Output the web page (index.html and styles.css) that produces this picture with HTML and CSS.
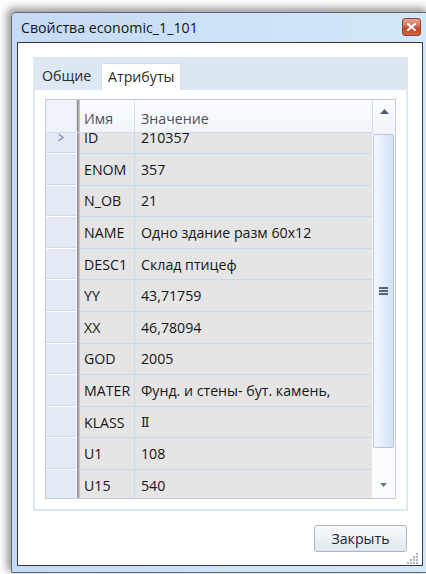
FILE: index.html
```html
<!DOCTYPE html>
<html lang="ru">
<head>
<meta charset="utf-8">
<title>Свойства economic_1_101</title>
<link rel="stylesheet" href="styles.css">
</head>
<body>
<div class="desk">
  <div class="window">
    <div class="titlebar">
      <span class="title">Свойства economic_1_101</span>
      <button class="close" aria-label="Закрыть">
        <svg width="9" height="8" viewBox="0 0 9 8"><path d="M1 1 L8 7 M8 1 L1 7" stroke="#fff" stroke-width="2" stroke-linecap="square"/></svg>
      </button>
    </div>
    <div class="client">
      <div class="tabs">
        <div class="tabstrip">
          <div class="tab">Общие</div>
          <div class="tab active">Атрибуты</div>
        </div>
        <div class="panel">
          <div class="grid">
            <div class="main">
              <div class="hrow">
                <div class="rh-h"></div>
                <div class="sep"></div>
                <div class="hc c-name">Имя</div>
                <div class="hc c-val">Значение</div>
              </div>
              <div class="body">
                <div class="rows">
                  <div class="row"><div class="rh"><svg width="8" height="9" viewBox="0 0 8 9"><path d="M1.5 1 L6 4.5 L1.5 8" fill="none" stroke="#8797aa" stroke-width="1.4"/></svg></div><div class="sep"></div><div class="c c-name">ID</div><div class="c c-val">210357</div></div>
                  <div class="row"><div class="rh"></div><div class="sep"></div><div class="c c-name">ENOM</div><div class="c c-val">357</div></div>
                  <div class="row"><div class="rh"></div><div class="sep"></div><div class="c c-name">N_OB</div><div class="c c-val">21</div></div>
                  <div class="row"><div class="rh"></div><div class="sep"></div><div class="c c-name">NAME</div><div class="c c-val">Одно здание разм 60x12</div></div>
                  <div class="row"><div class="rh"></div><div class="sep"></div><div class="c c-name">DESC1</div><div class="c c-val">Склад птицеф</div></div>
                  <div class="row"><div class="rh"></div><div class="sep"></div><div class="c c-name">YY</div><div class="c c-val">43,71759</div></div>
                  <div class="row"><div class="rh"></div><div class="sep"></div><div class="c c-name">XX</div><div class="c c-val">46,78094</div></div>
                  <div class="row"><div class="rh"></div><div class="sep"></div><div class="c c-name">GOD</div><div class="c c-val">2005</div></div>
                  <div class="row"><div class="rh"></div><div class="sep"></div><div class="c c-name">MATER</div><div class="c c-val">Фунд. и стены- бут. камень,</div></div>
                  <div class="row"><div class="rh"></div><div class="sep"></div><div class="c c-name">KLASS</div><div class="c c-val"><span class="roman">Ⅱ</span></div></div>
                  <div class="row"><div class="rh"></div><div class="sep"></div><div class="c c-name">U1</div><div class="c c-val">108</div></div>
                  <div class="row"><div class="rh"></div><div class="sep"></div><div class="c c-name">U15</div><div class="c c-val">540</div></div>
                </div>
              </div>
            </div>
            <div class="vscroll">
              <div class="sb-up"><svg width="9" height="5" viewBox="0 0 9 5"><path d="M0 5 L4.5 0 L9 5 Z" fill="#4e5f74"/></svg></div>
              <div class="thumb"><span class="grip"></span><span class="grip"></span><span class="grip"></span></div>
              <div class="track"></div>
              <div class="sb-down"><svg width="7" height="4" viewBox="0 0 7 4"><path d="M0 0 L7 0 L3.5 4 Z" fill="#6a7280"/></svg></div>
            </div>
          </div>
        </div>
      </div>
      <div class="footer">
        <button class="btn">Закрыть</button>
      </div>
      <svg class="sizegrip" width="13" height="11" viewBox="0 0 13 11">
        <g fill="#a9b4c2">
          <rect x="10" y="0" width="2" height="2"/>
          <rect x="7" y="3" width="2" height="2"/><rect x="10" y="3" width="2" height="2"/>
          <rect x="4" y="6" width="2" height="2"/><rect x="7" y="6" width="2" height="2"/><rect x="10" y="6" width="2" height="2"/>
          <rect x="1" y="9" width="2" height="2"/><rect x="4" y="9" width="2" height="2"/><rect x="7" y="9" width="2" height="2"/><rect x="10" y="9" width="2" height="2"/>
        </g>
      </svg>
    </div>
  </div>
</div>
</body>
</html>
```
FILE: styles.css
```css
* { box-sizing: border-box; }

html, body {
  margin: 0;
  padding: 0;
}

body {
  width: 426px;
  height: 574px;
  overflow: hidden;
  background: #ffffff;
  font-family: "Open Sans", "Noto Sans", "DejaVu Sans", sans-serif;
  color: #1b1b1b;
}

.desk {
  height: 574px;
  padding: 12px 0 0 11px;
}

/* Aero-style window frame */
.window {
  width: 418px;
  height: 561px;
  border: 1px solid #5f6a76;
  border-radius: 5px 0 0 0;
  background: linear-gradient(to right, #c4dbf4 0%, #cfe3f8 60%, #d4e7fa 100%);
  padding: 0 5px 6px 5px;
  box-shadow: -3px -3px 9px 1px rgba(0, 0, 0, 0.42);
  display: flex;
  flex-direction: column;
}

.titlebar {
  height: 29px;
  display: flex;
  align-items: center;
  padding-left: 4px;
}

.title {
  font-size: 14.2px;
  color: #151515;
  padding-bottom: 1px;
}

.close {
  margin-left: auto;
  margin-right: 2px;
  align-self: flex-start;
  margin-top: 5px;
  width: 19px;
  height: 18px;
  padding: 0;
  border: 1px solid #8d4434;
  border-radius: 3px;
  background: linear-gradient(#e6a190 0%, #d67058 45%, #c2432a 55%, #d5623f 100%);
  display: flex;
  align-items: center;
  justify-content: center;
}

.client {
  position: relative;
  height: 524px;
  border: 1px solid #383838;
  background: #ffffff;
  padding: 14px 14px 13px 15px;
  display: flex;
  flex-direction: column;
}

/* Tab control */
.tabs {
  height: 454px;
  display: flex;
  flex-direction: column;
}

.tabstrip {
  height: 33px;
  background: #dee8f4;
  display: flex;
  align-items: flex-end;
  padding-left: 2px;
}

.tab {
  width: 66px;
  height: 27px;
  padding: 3px 0 0 7px;
  font-size: 14.2px;
  color: #2a2a2a;
}

.tab.active {
  width: 80px;
  background: #ffffff;
  border: 1px solid #d3dde9;
  border-bottom: none;
  padding-left: 6px;
}

.panel {
  flex: 1;
  border: 2px solid #dee8f4;
  border-top: none;
  padding: 9px 10px 10px 10px;
}

/* Data grid */
.grid {
  height: 400px;
  border: 1px solid #c4cdd9;
  display: flex;
}

.main {
  flex: 1;
  display: flex;
  flex-direction: column;
  min-width: 0;
}

.hrow {
  height: 33px;
  display: flex;
  background: linear-gradient(#fbfcfe, #f1f5fb);
  border-bottom: 1px solid #d3dce8;
}

.rh-h {
  width: 31px;
  background: #eef3fa;
  border-right: 1px solid #dde5ef;
}

.sep {
  width: 3px;
  background: linear-gradient(to right, #7f7f7f, #a9a9a9 50%, #d2d2d2);
}

.hc {
  display: flex;
  align-items: center;
  font-size: 14.2px;
  color: #505050;
  padding-top: 4px;
}

.hc.c-name {
  width: 55px;
  padding-left: 4px;
  border-right: 1px solid #d6deea;
}

.hc.c-val {
  flex: 1;
  padding-left: 6px;
}

.body {
  flex: 1;
  overflow: hidden;
}

/* the list is scrolled a little: the first row sits partly under the header */
.rows {
  margin-top: -10.6px;
}

.row {
  height: 31.6px;
  display: flex;
}

.rh {
  width: 31px;
  background: #e3eaf6;
  border-bottom: 1px solid #ffffff;
  border-right: 1px solid #f4f7fc;
  box-shadow: inset 0 -1px 0 #cfdbeb;
  display: flex;
  align-items: flex-end;
  justify-content: center;
  padding-bottom: 11px;
}

.c {
  background: #e5e5e5;
  border-bottom: 1px solid #c8d8ed;
  display: flex;
  align-items: center;
  font-size: 14.2px;
  color: #161616;
  white-space: nowrap;
  overflow: hidden;
}

.c.c-name {
  width: 55px;
  padding-left: 4px;
  border-right: 1px solid #c8d8ed;
}

.c.c-val {
  flex: 1;
  padding-left: 6px;
}

.roman {
  font-family: "DejaVu Serif", "Liberation Serif", serif;
  font-size: 12.5px;
}

/* Vertical scrollbar */
.vscroll {
  width: 23px;
  display: flex;
  flex-direction: column;
  background: #fbfcfe;
}

.sb-up {
  height: 34px;
  display: flex;
  justify-content: center;
  padding-top: 9px;
  padding-left: 1px;
  background: linear-gradient(#fbfcfe, #f1f5fb);
  border-left: 1px solid #d6deea;
}

.thumb {
  height: 314px;
  margin: 0 1px 0 1px;
  border: 1px solid #b7c5d7;
  border-radius: 2px;
  background: linear-gradient(to right, #f4f8fd 0%, #e6eef9 40%, #d5e2f3 100%);
  display: flex;
  flex-direction: column;
  align-items: center;
  justify-content: center;
  gap: 1px;
}

.grip {
  width: 9px;
  height: 2px;
  background: #52637a;
}

.track {
  flex: 1;
}

.sb-down {
  height: 22px;
  display: flex;
  justify-content: center;
  padding-top: 7px;
}

/* Footer with the close button */
.footer {
  margin-top: 14px;
  display: flex;
  justify-content: flex-end;
}

.btn {
  width: 93px;
  height: 27px;
  margin-right: 1px;
  border: 1px solid #acb8c8;
  border-radius: 3px;
  background: linear-gradient(#f8fafc 0%, #edf1f6 50%, #e0e6ee 100%);
  font-family: "Open Sans", "Noto Sans", sans-serif;
  font-size: 14.2px;
  color: #1d2733;
  padding: 0;
}

.sizegrip {
  position: absolute;
  right: 3px;
  bottom: 1px;
}
```
